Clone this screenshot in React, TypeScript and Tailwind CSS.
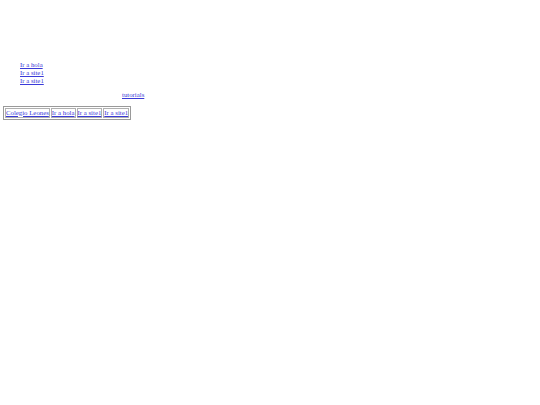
export default function App() {
  const links = ['Ir a hola', 'Ir a site1', 'Ir a site1'];
  const cells = ['Colegio Leones', 'Ir a hola', 'Ir a site1', 'Ir a site1'];

  return (
    <div className="min-h-[405px] w-[540px] bg-white px-[3px] pt-[61px] font-['Liberation_Serif',serif] text-[6.8px] leading-[7.8px] text-black">
      <ul className="list-none pl-[17px]">
        {links.map((l, i) => (
          <li key={i}>
            <a href="#" className="text-[#3a3ad8] underline">
              {l}
            </a>
          </li>
        ))}
      </ul>
      <p className="mt-[6.5px] pl-[119px]">
        <a href="#" className="text-[#3a3ad8] underline">
          tutorials
        </a>
      </p>
      <table className="mt-[7px] border-separate border-spacing-[1px] border border-[#9a9a9a]">
        <tbody>
          <tr>
            {cells.map((c, i) => (
              <td key={i} className="border border-[#b0b0b0] p-0 leading-[8.5px]">
                <a href="#" className="text-[#3a3ad8] underline">
                  {c}
                </a>
              </td>
            ))}
          </tr>
        </tbody>
      </table>
    </div>
  );
}
